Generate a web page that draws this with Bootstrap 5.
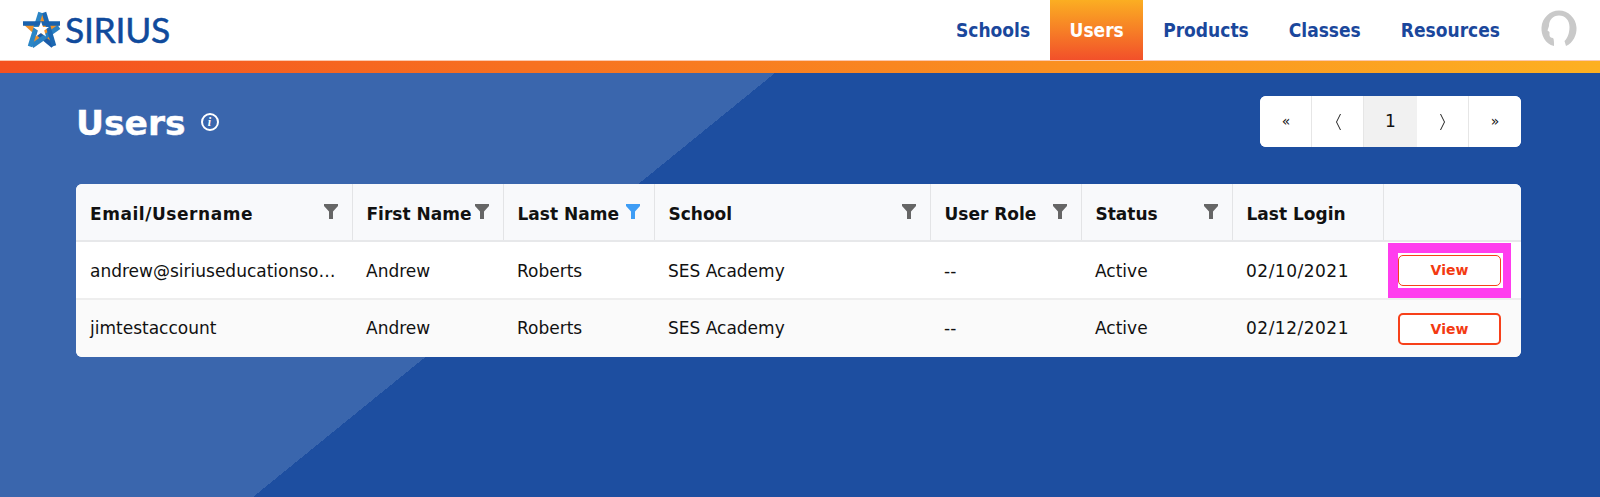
<!DOCTYPE html>
<html lang="en">
<head>
<meta charset="utf-8">
<title>Users</title>
<link rel="stylesheet" href="https://cdn.jsdelivr.net/npm/bootstrap@5.3.0/dist/css/bootstrap.min.css">
<style>
html,body{height:497px;overflow:hidden}
body{font-family:"DejaVu Sans",sans-serif;color:#111;background:#1d4ea0}
.topbar{height:60px;background:#fff;padding:0 19px 0 20px;box-shadow:0 1px 0 #fbc9b0}
.brandmark{gap:3px;text-decoration:none}
.brandmark svg{margin-top:-2px}
.brandword{font-family:Lato,sans-serif;font-size:35.500px;line-height:1;color:#104a9c;letter-spacing:-.3px;font-weight:400;-webkit-text-stroke:.5px #104a9c;margin-top:-1px}
.mainnav{font-family:"DejaVu Sans Condensed","DejaVu Sans",sans-serif;font-stretch:condensed;font-weight:700;font-size:19px}
.mainnav .nav-link{color:#1a479c;height:60px;line-height:60px;padding:0 20px}
.mainnav .nav-link.current{color:#fff;width:93px;text-align:center;padding:0;background:linear-gradient(#fbae22,#f2502a)}
.avatarmark{margin-left:17px;display:block;margin-top:-2px}
.accentbar{height:12px;margin-top:1px;background:linear-gradient(90deg,#f4511f,#fdb022)}
.stage{height:424px;padding:23px 79px 0 76px;
 background:
  linear-gradient(to bottom right,#3a66ad 50%,transparent 50%) 253px 0/522px 424px no-repeat,
  linear-gradient(#3a66ad,#3a66ad) 0 0/253px 100% no-repeat,
  #1d4ea0}
.pagehead{height:51px;margin-bottom:37px}
.pagetitle{font-size:34.500px;font-weight:700;color:#fff;margin:4px 0 0;line-height:1;-webkit-text-stroke:.4px #fff}
.infodot{width:18px;height:18px;border:2px solid #fff;border-radius:50%;color:#fff;font:italic 700 12px/14px "Liberation Serif",serif;text-align:center;margin-left:15px}
.pager{margin:0;width:261px;height:51px;background:#fff;border-radius:6px;overflow:hidden}
.pager .page-item{flex:1 1 0}
.pager .page-link{border:0;border-left:1px solid #e6e6e6;border-radius:0!important;color:#111;background:#fff;height:51px;padding:0;display:flex;align-items:center;justify-content:center;font-size:14px;margin:0}
.pager .page-item:first-child .page-link{border-left:0}
.pager .page-item.active .page-link{background:#f1f1f1;color:#111;font-size:17px;border-color:#e6e6e6}
.chev{width:7px;height:18px;fill:none;stroke:#222;stroke-width:1}
.gridcard{border-radius:6px;overflow:hidden;background:#fff;width:1445px}
.usergrid{table-layout:fixed;width:100%;margin:0;font-size:17px;color:#111}
.usergrid th,.usergrid td{padding:0 14px;vertical-align:middle;background:transparent;box-shadow:none;color:#111}
.usergrid thead tr{height:57px;background:#f8f9fb}
.usergrid thead th{border-bottom:2px solid #e7e8ea;border-right:1px solid #e3e4e6;font-size:17px;font-weight:700;padding-top:5px}
.usergrid thead th:last-child{border-right:0}
.usergrid tbody tr{height:58px}
.usergrid tbody tr+tr{background:#fafafa}
.usergrid tbody tr td{border-bottom:2px solid #eeeeee;padding-top:1px}
.usergrid tbody tr:first-child td{padding-top:3px}
.usergrid tbody tr:last-child td{border-bottom:0}
.usergrid td.clip{overflow:hidden;text-overflow:ellipsis;white-space:nowrap}
.headcell{height:51px}
.widehead{letter-spacing:.55px}
.widedate{letter-spacing:.5px}
.funnel{width:14px;height:15px;flex:none;margin-top:-6px;fill:#666}
.funnel.on{fill:#3e9df5}
.usergrid tbody tr td.actioncell{padding:0 0 0 15px}
.viewbtn{display:block;width:103px;height:32px;padding:0;font-size:14px;font-weight:700;line-height:28px;color:#f33a12;background:#fff;border:2px solid #f7401a;border-radius:5px}
.viewbtn:hover{color:#f33a12;background:#fff;border-color:#f33a12}
.marked{background:#ff3dee;padding:10px 8px 10px 10px;width:123px;height:55px;margin-left:-10px}
.marked .whitecut{background:#fff;height:35px;padding:2px 0}
.marked .viewbtn{height:31px;border-width:1px;line-height:29px}
</style>
</head>
<body>
<header class="topbar d-flex align-items-center justify-content-between">
  <a class="brandmark d-flex align-items-center" href="#">
    <svg width="42" height="42" viewBox="0 0 42 42" aria-hidden="true">
      <polygon points="22,5 27,15 40,16 31,25 34,38 22,31 10,38 13,25 3,16 16,15" fill="#f0922a"/>
      <g fill="none" stroke-width="4.600">
        <path stroke="#1a5ba8" d="M33 38 L15 23"/>
        <path stroke="#2a80c2" d="M39 19 L12 38"/>
        <path stroke="#1c68b2" d="M24 4.500 L34 38"/>
        <path stroke="#2b86c6" d="M10 38.500 L20.500 4.500"/>
        <path stroke="#1a62ad" d="M3 15.500 L40 15.500"/>
      </g>
      <polygon points="21,13.500 23,19 29,19 24.200,22.500 26,28.500 21,25 16,28.500 17.800,22.500 13,19 19,19" fill="#fff"/>
    </svg>
    <span class="brandword">SIRIUS</span>
  </a>
  <div class="d-flex align-items-center">
    <ul class="nav mainnav">
      <li class="nav-item"><a class="nav-link" href="#">Schools</a></li>
      <li class="nav-item"><a class="nav-link current" href="#">Users</a></li>
      <li class="nav-item"><a class="nav-link" href="#">Products</a></li>
      <li class="nav-item"><a class="nav-link" href="#">Classes</a></li>
      <li class="nav-item"><a class="nav-link" href="#">Resources</a></li>
    </ul>
    <svg class="avatarmark" width="44" height="42" viewBox="0 0 44 42" aria-hidden="true">
      <path fill="#c9c9c9" d="M17 38C8 36 4 27 4.500 19.500 5 10 13 2.500 22 2.500S39 10 39.500 19.500C40 27 36 35 29 38L27.500 33C30.500 30.500 32.500 25 32.500 19 32.500 12 28 7.500 22 7.500 16 7.500 12 12 12 18L10.500 22.500 12.500 24V27C12.500 29 14 30 16 30 17 31 17 34 17 38Z"/>
    </svg>
  </div>
</header>
<div class="accentbar"></div>
<main class="stage">
  <div class="pagehead d-flex align-items-center justify-content-between">
    <div class="d-flex align-items-center">
      <h1 class="pagetitle">Users</h1>
      <span class="infodot">i</span>
    </div>
    <ul class="pagination pager">
      <li class="page-item"><a class="page-link" href="#">«</a></li>
      <li class="page-item"><a class="page-link" href="#"><svg class="chev" viewBox="0 0 7 18"><path d="M5.500 1 1.500 9 5.500 17"/></svg></a></li>
      <li class="page-item active"><a class="page-link" href="#">1</a></li>
      <li class="page-item"><a class="page-link" href="#"><svg class="chev" viewBox="0 0 7 18"><path d="M1.500 1 5.500 9 1.500 17"/></svg></a></li>
      <li class="page-item"><a class="page-link" href="#">»</a></li>
    </ul>
  </div>
  <div class="gridcard">
    <table class="table usergrid">
      <colgroup><col style="width:276px"><col style="width:151px"><col style="width:151px"><col style="width:276px"><col style="width:151px"><col style="width:151px"><col style="width:151px"><col style="width:138px"></colgroup>
      <thead>
        <tr>
          <th><div class="headcell d-flex align-items-center justify-content-between"><span class="widehead">Email/Username</span><svg class="funnel" viewBox="0 0 14 15"><path d="M0 0H14V2L9 7.500V15H5V7.500L0 2Z"/></svg></div></th>
          <th><div class="headcell d-flex align-items-center justify-content-between"><span>First Name</span><svg class="funnel" viewBox="0 0 14 15"><path d="M0 0H14V2L9 7.500V15H5V7.500L0 2Z"/></svg></div></th>
          <th><div class="headcell d-flex align-items-center justify-content-between"><span>Last Name</span><svg class="funnel on" viewBox="0 0 14 15"><path d="M0 0H14V2L9 7.500V15H5V7.500L0 2Z"/></svg></div></th>
          <th><div class="headcell d-flex align-items-center justify-content-between"><span>School</span><svg class="funnel" viewBox="0 0 14 15"><path d="M0 0H14V2L9 7.500V15H5V7.500L0 2Z"/></svg></div></th>
          <th><div class="headcell d-flex align-items-center justify-content-between"><span>User Role</span><svg class="funnel" viewBox="0 0 14 15"><path d="M0 0H14V2L9 7.500V15H5V7.500L0 2Z"/></svg></div></th>
          <th><div class="headcell d-flex align-items-center justify-content-between"><span>Status</span><svg class="funnel" viewBox="0 0 14 15"><path d="M0 0H14V2L9 7.500V15H5V7.500L0 2Z"/></svg></div></th>
          <th>Last Login</th>
          <th></th>
        </tr>
      </thead>
      <tbody>
        <tr>
          <td class="clip">andrew@siriuseducationsolutions.com</td><td>Andrew</td><td>Roberts</td><td>SES Academy</td><td>--</td><td>Active</td><td class="widedate">02/10/2021</td>
          <td class="actioncell"><div class="marked"><div class="whitecut"><a class="btn viewbtn" href="#">View</a></div></div></td>
        </tr>
        <tr>
          <td class="clip">jimtestaccount</td><td>Andrew</td><td>Roberts</td><td>SES Academy</td><td>--</td><td>Active</td><td class="widedate">02/12/2021</td>
          <td class="actioncell"><a class="btn viewbtn" href="#">View</a></td>
        </tr>
      </tbody>
    </table>
  </div>
</main>
<script src="https://cdn.jsdelivr.net/npm/bootstrap@5.3.0/dist/js/bootstrap.bundle.min.js"></script>
</body>
</html>
